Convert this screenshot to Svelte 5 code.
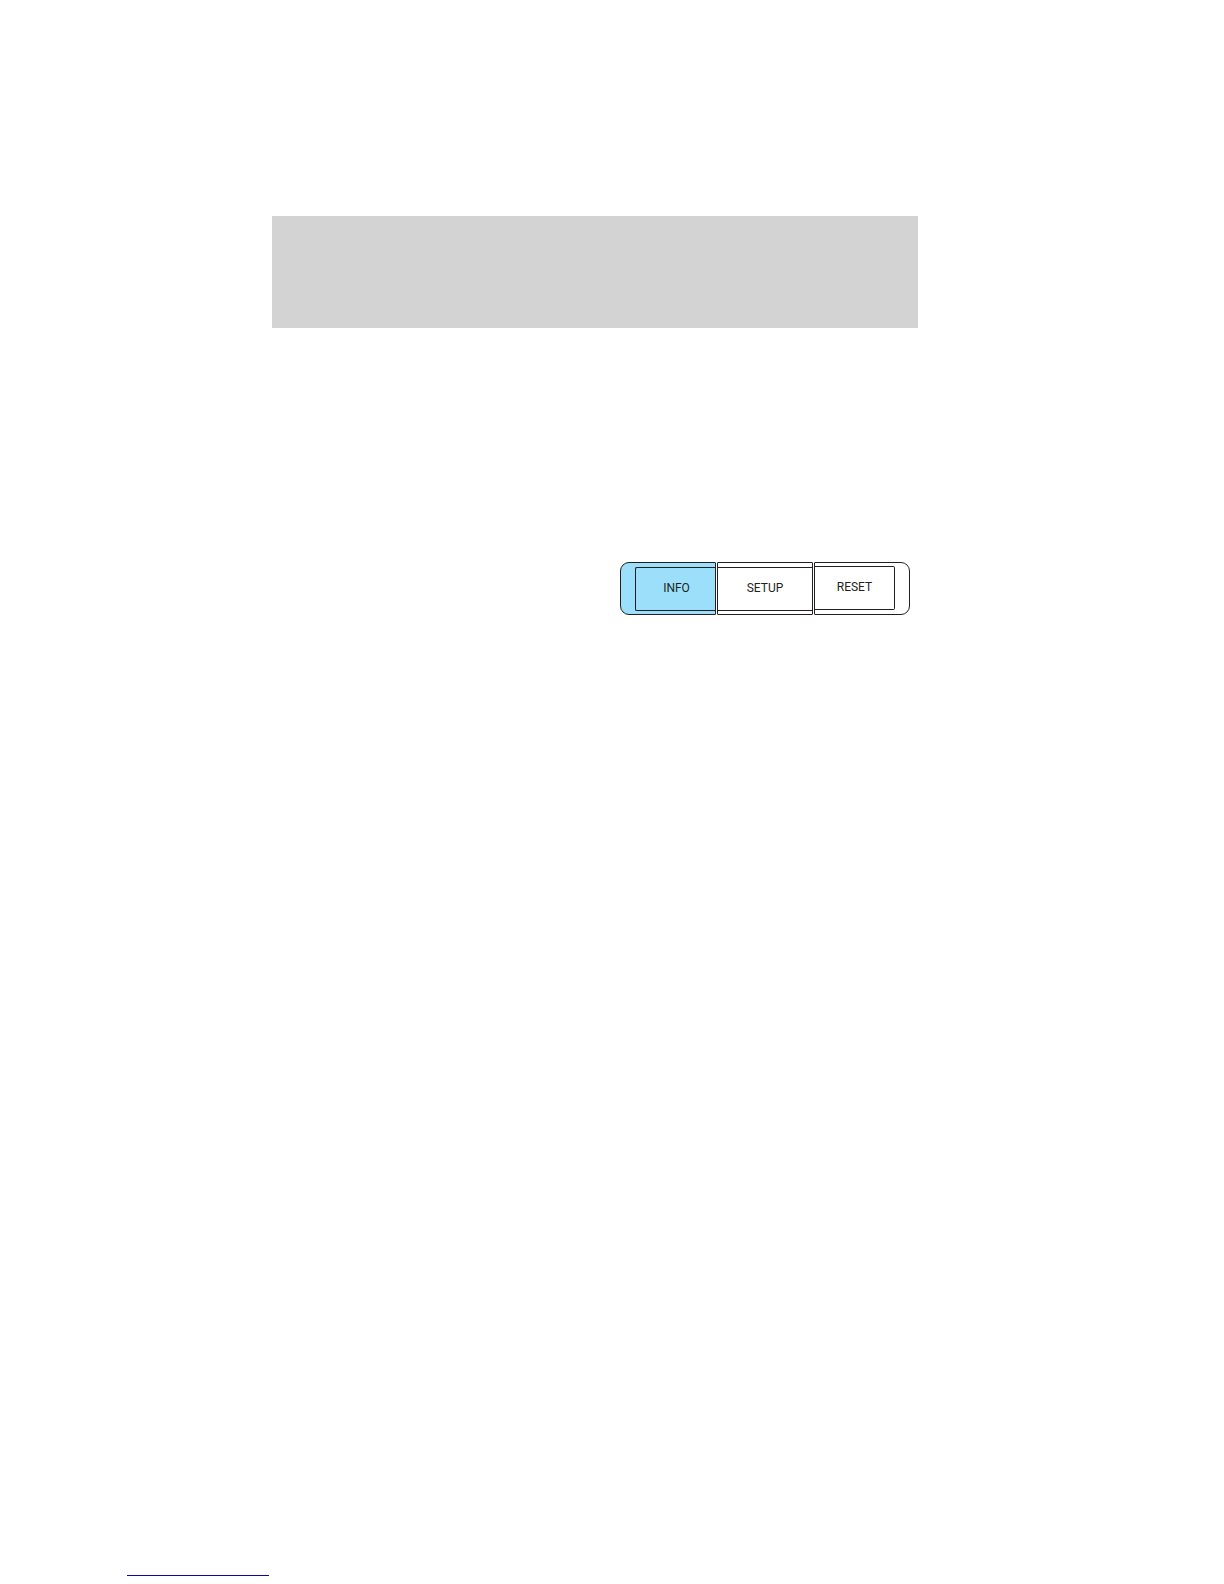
<script>
	const controls = [
		{ id: 'info', label: 'INFO' },
		{ id: 'setup', label: 'SETUP' },
		{ id: 'reset', label: 'RESET' }
	];

	let active = $state('info');
</script>

<div class="page">
	<main>
		<div class="banner"></div>

		<div class="controls">
			{#each controls as control}
				<button
					class="control {control.id}"
					class:active={active === control.id}
					onclick={() => (active = control.id)}
				>
					<span class="face">{control.label}</span>
				</button>
			{/each}
		</div>
	</main>

	<footer>
		<a class="footer-link" href="#top" aria-label="Back to top"></a>
	</footer>
</div>

<style>
	:global(body) {
		margin: 0;
		background: #fff;
	}

	.page {
		box-sizing: border-box;
		display: flex;
		flex-direction: column;
		min-height: 100vh;
		padding-bottom: 8px;
	}

	main {
		flex: 1;
		padding: 216px 306px 0 272px;
	}

	.banner {
		height: 112px;
		background: #d3d3d3;
	}

	.controls {
		display: flex;
		justify-content: flex-end;
		gap: 1px;
		margin-top: 234px;
		padding-right: 8px;
	}

	.control {
		box-sizing: border-box;
		display: flex;
		width: 96px;
		height: 53px;
		margin: 0;
		padding: 4px 0 3px;
		border: 1px solid #231f20;
		border-radius: 1px;
		background: #fff;
		color: #231f20;
		font-family: Roboto, 'Liberation Sans', sans-serif;
		font-size: 12px;
		line-height: 16px;
		cursor: pointer;
	}

	.active {
		background: #9bdffa;
	}

	.face {
		box-sizing: border-box;
		display: flex;
		flex: 1;
		align-items: center;
		justify-content: center;
		align-self: stretch;
		padding-bottom: 3px;
		border: 1px solid #231f20;
		border-width: 1px 0;
	}

	.info {
		padding-left: 14px;
		border-radius: 9px 1px 1px 9px;
	}

	.info .face {
		padding-left: 2px;
		border-left-width: 1px;
		border-radius: 2px 0 0 2px;
	}

	.reset {
		padding: 3px 14px 4px 0;
		border-radius: 1px 9px 9px 1px;
	}

	.reset .face {
		border-right-width: 1px;
		border-radius: 0 2px 2px 0;
	}

	footer {
		padding-left: 127px;
	}

	.footer-link {
		display: block;
		width: 142px;
		border-bottom: 1px solid #0a0aa8;
	}
</style>
